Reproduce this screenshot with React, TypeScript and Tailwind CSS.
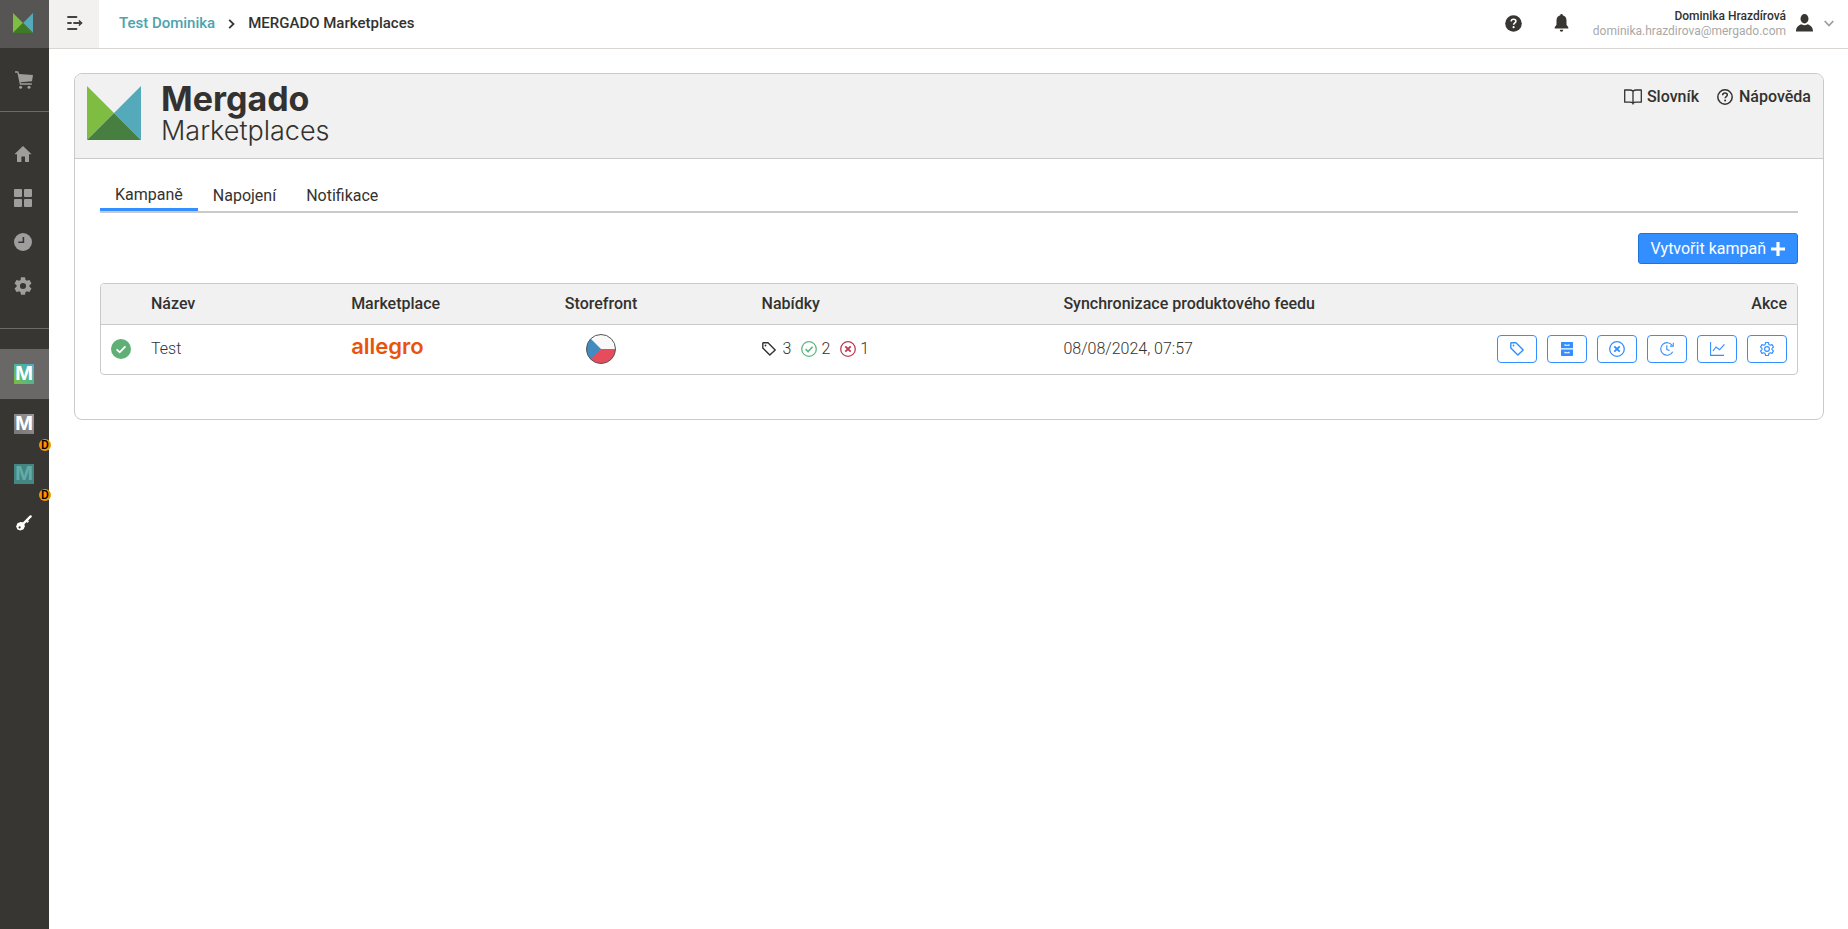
import React from 'react';
import type { ReactNode } from 'react';

function MergadoMark({ className, bottom = '#467f3f' }: { className: string; bottom?: string }) {
  return (
    <svg viewBox="0 0 54 54" className={className} aria-hidden="true">
      <path d="M0 0 27 27 0 54Z" fill="#7fbc42" />
      <path d="M54 0 27 27 54 54Z" fill="#54a9ba" />
      <path d="M27 27 54 54H0Z" fill={bottom} />
    </svg>
  );
}

function CartIcon() {
  return (
    <svg viewBox="0 0 18 18" className="size-[18px]" fill="currentColor" aria-hidden="true">
      <path d="M0 .3h3.2l1 2.6L18 4.1l-1 6.2-11.5.9.3 1.1h11v1.4H4.9L2.4 1.8H0Z" />
      <circle cx="5.6" cy="16.2" r="1.5" />
      <circle cx="14" cy="16.2" r="1.5" />
    </svg>
  );
}

function HomeIcon() {
  return (
    <svg viewBox="0 0 18 18" className="size-[18px]" fill="currentColor" aria-hidden="true">
      <path d="M9 1 17.6 9.3H15V17h-4v-5.6H7.4V17H3V9.3H.4Z" />
    </svg>
  );
}

function GridIcon() {
  return (
    <svg viewBox="0 0 18 18" className="size-[18px]" fill="currentColor" aria-hidden="true">
      <rect width="8" height="8" rx="1" />
      <rect x="10" width="8" height="8" rx="1" />
      <rect y="10" width="8" height="8" rx="1" />
      <rect x="10" y="10" width="8" height="8" rx="1" />
    </svg>
  );
}

function ClockIcon() {
  return (
    <svg viewBox="0 0 18 18" className="size-[18px]" aria-hidden="true">
      <circle cx="9" cy="9" r="9" fill="currentColor" />
      <path d="M9.4 4v5.300H4.300" fill="none" stroke="#383632" strokeWidth="1.6" />
    </svg>
  );
}

function CogIcon() {
  return (
    <svg viewBox="2 2 20 20" className="size-[18px]" fill="currentColor" aria-hidden="true">
      <path d="M19.14 12.94c.04-.3.06-.61.06-.94 0-.32-.02-.64-.07-.94l2.03-1.58a.49.49 0 0 0 .12-.61l-1.92-3.32a.49.49 0 0 0-.59-.22l-2.39.96a7 7 0 0 0-1.62-.94l-.36-2.54a.48.48 0 0 0-.48-.41h-3.84a.47.47 0 0 0-.47.41l-.36 2.54c-.59.24-1.13.57-1.62.94l-2.39-.96a.48.48 0 0 0-.59.22L2.74 8.87a.47.47 0 0 0 .12.61l2.03 1.58c-.05.3-.09.63-.09.94s.02.64.07.94l-2.03 1.58a.49.49 0 0 0-.12.61l1.92 3.32c.12.22.37.29.59.22l2.39-.96c.5.38 1.03.7 1.62.94l.36 2.54c.05.24.24.41.48.41h3.84c.24 0 .44-.17.47-.41l.36-2.54c.59-.24 1.13-.56 1.62-.94l2.39.96c.22.08.47 0 .59-.22l1.92-3.32a.47.47 0 0 0-.12-.61ZM12 15.4a3.4 3.4 0 1 1 0-6.8 3.4 3.4 0 0 1 0 6.8Z" />
    </svg>
  );
}

function KeyIcon() {
  return (
    <svg viewBox="0 0 16 16" className="size-4" aria-hidden="true">
      <path d="M6.5 9.5 14.6 1.4" stroke="#fff" strokeWidth="2.4" strokeLinecap="round" />
      <path d="m10 5 2.200 2.200" stroke="#fff" strokeWidth="2.400" />
      <path d="M4.600 6.900 8 7.400l.8 3.900-1.200 2.900-3.200 1.300-3-.9-1.200-3 1.200-3.400Z" fill="#fff" />
      <circle cx="3.6" cy="12.400" r="1.1" fill="#383632" />
    </svg>
  );
}

function MenuIcon() {
  return (
    <svg viewBox="0 0 16 14" className="h-3.5 w-4" fill="none" stroke="#45433f" strokeWidth="1.8" strokeLinecap="round" aria-hidden="true">
      <path d="M1 1h8.500M1 7h3M7 7h7M1 13h8.500" />
      <path d="M12 4.500 15.500 7 12 9.500Z" fill="#45433f" stroke="none" />
      <path d="m12.300 4.700 2.300 2.300-2.300 2.300" strokeWidth="1.300" />
    </svg>
  );
}

function HelpSolidIcon() {
  return (
    <svg viewBox="0 0 17 17" className="size-[17px]" aria-hidden="true">
      <circle cx="8.5" cy="8.5" r="8.3" fill="#383632" />
      <path d="M6.1 6.4c.1-1.4 1-2.2 2.4-2.2s2.4.8 2.4 2c0 1.7-2.2 1.7-2.3 3.6" fill="none" stroke="#fff" strokeWidth="1.6" />
      <circle cx="8.6" cy="12.2" r="1.1" fill="#fff" />
    </svg>
  );
}

function BellIcon() {
  return (
    <svg viewBox="0 0 15 18" className="h-[18px] w-[15px]" fill="#383632" aria-hidden="true">
      <path d="M7.5 0c.8 0 1.2.5 1.2 1.3 2.4.6 3.8 2.5 3.8 5.1v4.3l1.8 2.6v1.2H.7v-1.2l1.8-2.6V6.4c0-2.6 1.4-4.5 3.8-5.1C6.3.5 6.7 0 7.5 0ZM5.8 15.7h3.4c0 1.3-.7 2-1.7 2s-1.7-.7-1.7-2Z" />
    </svg>
  );
}

function UserIcon() {
  return (
    <svg viewBox="0 0 17 18" className="h-[18px] w-[17px]" fill="#383632" aria-hidden="true">
      <ellipse cx="8.5" cy="4.8" rx="4" ry="4.7" />
      <path d="M0 17.5c0-4 1.6-5.8 5.4-7.3 1.9 1.3 4.3 1.3 6.2 0 3.8 1.5 5.4 3.3 5.4 7.3Z" />
    </svg>
  );
}

function BookIcon() {
  return (
    <svg viewBox="0 0 18 16" className="h-4 w-[18px]" fill="none" stroke="currentColor" strokeWidth="1.3" strokeLinejoin="round" aria-hidden="true">
      <path d="M9 2.2C8 1.2 7 1 5.5 1H.7v12.2H6c1.4 0 2.3.2 3 1 .7-.8 1.6-1 3-1h5.3V1h-4.8C11 1 10 1.2 9 2.2Zm0 0v13.3" />
    </svg>
  );
}

function HelpIcon() {
  return (
    <svg viewBox="0 0 16 16" className="size-4" fill="none" stroke="currentColor" strokeWidth="1.5" aria-hidden="true">
      <circle cx="8" cy="8" r="7.2" />
      <path d="M5.7 6.2c0-1.3.9-2.1 2.3-2.1s2.3.8 2.3 1.9c0 1.5-2.2 1.6-2.200 3.300" strokeWidth="1.5" />
      <circle cx="8.1" cy="11.5" r="1" fill="currentColor" stroke="none" />
    </svg>
  );
}

function TagIcon({ className }: { className: string }) {
  return (
    <svg viewBox="0 0 14 14" className={className} fill="none" stroke="currentColor" strokeWidth="1.4" strokeLinejoin="round" aria-hidden="true">
      <path d="M.8 1.2v4.700l7 7.200 5.400-5.200L6 .8H1.200Z" />
      <circle cx="3.5" cy="3.5" r=".9" fill="currentColor" stroke="none" />
    </svg>
  );
}

function CircleIcon({ mark }: { mark: 'check' | 'cross' }) {
  return (
    <svg viewBox="0 0 16 16" className="size-4" fill="none" stroke="currentColor" aria-hidden="true">
      <circle cx="8" cy="8" r="7.3" strokeWidth="1.3" />
      {mark === 'check' ? (
        <path d="m4.6 8.2 2.5 2.4 4.5-4.9" strokeWidth="1.7" />
      ) : (
        <path d="m5.3 5.3 5.4 5.4m0-5.4-5.4 5.4" strokeWidth="1.9" />
      )}
    </svg>
  );
}

function CabinetIcon() {
  return (
    <svg viewBox="0 0 12 14" className="h-3.5 w-3" aria-hidden="true">
      <path d="M.5 0h11l.5.5v5.8H0V.5ZM0 7.6h12v5.9l-.5.5H.5l-.5-.5Z" fill="currentColor" />
      <path d="M4 2.2v1h4v-1M4 9.8v1h4v-1" fill="none" stroke="#fff" strokeWidth="1.1" />
    </svg>
  );
}

function HistoryIcon() {
  return (
    <svg viewBox="0 0 14 14" className="size-3.5" fill="none" stroke="currentColor" strokeWidth="1.1" aria-hidden="true">
      <path d="M12.3 3.500A6.300 6.300 0 1 0 12.700 9.700" />
      <path d="M13.300.8v3.300h-3.300" />
      <path d="M6.800 3.300v4.200l2.800.9" />
    </svg>
  );
}

function ChartIcon() {
  return (
    <svg viewBox="0 0 15 14" className="h-3.5 w-[15px]" fill="none" stroke="currentColor" aria-hidden="true">
      <path d="M.6 0v13.4H14" strokeWidth="1.1" />
      <path d="m3 9 3-4 3.600 2.800 4.800-5.400" strokeWidth="1.2" />
    </svg>
  );
}

function GearOutlineIcon() {
  return (
    <svg viewBox="0 0 24 24" className="size-4" fill="none" stroke="currentColor" strokeWidth="1.7" strokeLinejoin="round" aria-hidden="true">
      <circle cx="12" cy="12" r="3.6" />
      <path d="M9.9 2.2h4.2l.7 3 1.9 1.1 2.9-.9L21.700 9l-2.200 2.100v1.800l2.200 2.100-2.100 3.600-2.900-.9-1.900 1.100-.7 3H9.900l-.7-3-1.900-1.100-2.900.9L2.300 15l2.200-2.100v-1.800L2.300 9l2.100-3.600 2.900.9 1.900-1.100Z" />
    </svg>
  );
}

function CzechFlag() {
  return (
    <svg viewBox="0 0 30 30" className="size-[30px]" role="img" aria-label="CZ">
      <defs>
        <clipPath id="flag">
          <circle cx="15" cy="15" r="14.5" />
        </clipPath>
      </defs>
      <g clipPath="url(#flag)">
        <path d="M0 0h30v15H0Z" fill="#f9f9f9" />
        <path d="M0 15h30v15H0Z" fill="#e64c5c" />
        <path d="M0 0 15 15 0 30Z" fill="#428bc1" />
      </g>
      <circle cx="15" cy="15" r="14.5" fill="none" stroke="#555" strokeWidth="1" />
    </svg>
  );
}

const navIcons: { label: string; icon: ReactNode }[] = [
  { label: 'Home', icon: <HomeIcon /> },
  { label: 'Overview', icon: <GridIcon /> },
  { label: 'History', icon: <ClockIcon /> },
  { label: 'Settings', icon: <CogIcon /> },
];

const actions: { label: string; icon: ReactNode }[] = [
  { label: 'Nabídky', icon: <TagIcon className="size-3.5" /> },
  { label: 'Kategorie', icon: <CabinetIcon /> },
  { label: 'Chyby', icon: <CircleIcon mark="cross" /> },
  { label: 'Historie', icon: <HistoryIcon /> },
  { label: 'Statistiky', icon: <ChartIcon /> },
  { label: 'Nastavení', icon: <GearOutlineIcon /> },
];

function AppTile({ className }: { className: string }) {
  return (
    <span className={`flex size-5 items-center justify-center font-['Inter',sans-serif] text-[19px] leading-5 font-bold ${className}`}>
      M
    </span>
  );
}

function DevBadge() {
  return (
    <span className="absolute top-10 left-[39px] flex size-3 items-center justify-center rounded-full bg-[#f79400] text-xs leading-3 font-medium text-black">
      D
    </span>
  );
}

function Sidebar() {
  return (
    <nav className="relative z-10 flex w-[49px] shrink-0 flex-col bg-[#383632] text-[#a09e9c]">
      <a href="#mergado" aria-label="Mergado" className="flex h-12 items-center bg-[#565553] pb-0.5 pl-[13px]">
        <MergadoMark className="size-5" bottom="#3f7a27" />
      </a>
      <a href="#shop" aria-label="Shop" className="flex h-16 items-center border-b border-[#6d6b68] pl-[15px]">
        <CartIcon />
      </a>
      <div className="flex h-[217px] flex-col border-b border-[#6d6b68] pt-5">
        {navIcons.map((item) => (
          <a key={item.label} href={`#${item.label.toLowerCase()}`} aria-label={item.label} className="flex h-11 items-center pl-3.5">
            {item.icon}
          </a>
        ))}
      </div>
      <div className="flex flex-col pt-5">
        <a href="#marketplaces" className="flex h-[50px] items-center bg-[#6a6866] pl-3.5">
          <AppTile className="bg-linear-to-tr from-[#83bc1d] via-[#4fb58c] to-[#50a8d0] text-white" />
        </a>
        <a href="#app-dev" className="relative flex h-[50px] items-center pl-3.5">
          <AppTile className="bg-linear-to-tr from-[#777577] to-[#999799] text-white" />
          <DevBadge />
        </a>
        <a href="#app-test" className="relative flex h-[50px] items-center pl-3.5">
          <AppTile className="bg-[#458682] text-[#63aba6]" />
          <DevBadge />
        </a>
        <a href="#keys" aria-label="Keys" className="flex h-[50px] items-center pb-0.5 pl-4">
          <KeyIcon />
        </a>
      </div>
    </nav>
  );
}

function TopBar() {
  return (
    <header className="flex h-[49px] items-stretch border-b border-[#d9d5d2]">
      <button type="button" aria-label="Menu" className="flex w-[50px] items-center justify-center bg-[#f2f1f0] pb-0.5 pl-0.5">
        <MenuIcon />
      </button>
      <div className="flex items-center gap-[13px] pb-px pl-5 text-[15px] font-medium">
        <a href="#project" className="text-[#4ba3ae]">Test Dominika</a>
        <svg viewBox="0 0 7 10" className="h-2.5 w-[7px]" fill="none" stroke="#383632" strokeWidth="1.8" aria-hidden="true">
          <path d="m1.200.8 4.300 4.200-4.300 4.200" />
        </svg>
        <span>MERGADO Marketplaces</span>
      </div>
      <div className="ml-auto flex items-center pr-3.5">
        <button type="button" aria-label="Help" className="mr-8 pb-0.5">
          <HelpSolidIcon />
        </button>
        <button type="button" aria-label="Notifications" className="mr-6 pb-0.5">
          <BellIcon />
        </button>
        <button type="button" className="flex items-center pb-0.5 text-right">
          <span className="flex flex-col">
            <span className="text-xs leading-[15px] font-medium">Dominika Hrazdírová</span>
            <span className="text-xs leading-[14px] text-[#aaa8a6]">dominika.hrazdirova@mergado.com</span>
          </span>
          <span className="ml-2.5">
            <UserIcon />
          </span>
          <svg viewBox="0 0 10 7" className="ml-[11px] h-[7px] w-2.5" fill="none" stroke="#a09e9c" strokeWidth="1.8" aria-hidden="true">
            <path d="m.7 1 4.300 4.500L9.300 1" />
          </svg>
        </button>
      </div>
    </header>
  );
}

function CampaignTable() {
  return (
    <div className="mt-[19px] overflow-hidden rounded border border-[#cacaca]">
      <table className="w-full table-fixed text-left">
        <thead className="bg-[#f1f1f1]">
          <tr className="h-10 border-b border-[#cacaca]">
            <th className="w-10" aria-label="Stav" />
            <th className="w-[11.8%] px-2.5 font-medium">Název</th>
            <th className="w-[12.6%] px-2.5 font-medium">Marketplace</th>
            <th className="w-[11.6%] px-2.5 font-medium">Storefront</th>
            <th className="w-[17.8%] px-2.5 font-medium">Nabídky</th>
            <th className="px-2.5 font-medium">Synchronizace produktového feedu</th>
            <th className="w-[310px] px-2.5 text-right font-medium">Akce</th>
          </tr>
        </thead>
        <tbody>
          <tr className="h-[50px] font-light">
            <td className="pl-2.5">
              <svg viewBox="0 0 20 20" className="size-5" aria-hidden="true">
                <circle cx="10" cy="10" r="10" fill="#5fb075" />
                <path d="m5.6 10.3 3.1 3 5.700-6" fill="none" stroke="#fff" strokeWidth="1.8" />
              </svg>
            </td>
            <td className="px-2.5">Test</td>
            <td className="px-2.5">
              <span className="block pb-1.5 font-['Inter',sans-serif] text-[22px] leading-6 font-semibold text-[#e8540c]">allegro</span>
            </td>
            <td className="px-2.5">
              <span className="flex w-[72px] justify-center">
                <CzechFlag />
              </span>
            </td>
            <td className="px-2.5">
              <span className="flex items-center">
                <TagIcon className="mr-[7px] size-3.5" />
                3
                <span className="mr-1 ml-2.5 text-[#5fb884]">
                  <CircleIcon mark="check" />
                </span>
                2
                <span className="mr-1 ml-2.5 text-[#be3d54]">
                  <CircleIcon mark="cross" />
                </span>
                1
              </span>
            </td>
            <td className="px-2.5">08/08/2024, 07:57</td>
            <td className="px-2.5">
              <div className="flex justify-end gap-2.5">
                {actions.map((action) => (
                  <button
                    key={action.label}
                    type="button"
                    aria-label={action.label}
                    className="flex h-7 w-10 items-center justify-center rounded border border-[#338fff] text-[#338fff]"
                  >
                    {action.icon}
                  </button>
                ))}
              </div>
            </td>
          </tr>
        </tbody>
      </table>
    </div>
  );
}

export default function App() {
  return (
    <div className="flex min-h-screen bg-white font-['Roboto',sans-serif] text-base text-[#333230]">
      <Sidebar />
      <div className="min-w-0 flex-1">
        <TopBar />
        <main className="px-6 pt-6 pl-[25px]">
          <section className="overflow-hidden rounded-lg border border-[#cacaca]">
            <div className="flex h-[85px] items-start border-b border-[#cacaca] bg-[#f1f1f1] px-3">
              <MergadoMark className="mt-3 size-[54px]" />
              <h1 className="ml-5 flex flex-col pt-2 font-['Inter',sans-serif]">
                <span className="text-[34px] leading-[34px] font-bold">Mergado</span>
                <span className="text-[27px] leading-[30px] font-light">Marketplaces</span>
              </h1>
              <div className="ml-auto flex gap-[18px] pt-[11px] font-medium">
                <a href="#slovnik" className="flex items-center gap-[5px]">
                  <BookIcon />
                  Slovník
                </a>
                <a href="#napoveda" className="flex items-center gap-1.5">
                  <HelpIcon />
                  Nápověda
                </a>
              </div>
            </div>
            <div className="px-[25px] pt-6 pb-11">
              <div role="tablist" className="flex h-[30px] items-stretch border-b-2 border-[#cacaca]">
                <button type="button" role="tab" aria-selected="true" className="border-b-3 border-[#338fff] px-[15px] pb-1.5">
                  Kampaně
                </button>
                <button type="button" role="tab" aria-selected="false" className="px-[15px] pb-0.5">
                  Napojení
                </button>
                <button type="button" role="tab" aria-selected="false" className="px-[15px] pb-0.5">
                  Notifikace
                </button>
              </div>
              <div className="mt-5 flex justify-end">
                <button type="button" className="flex h-[31px] items-center gap-[5px] rounded-[3px] border border-[#1f74d8] bg-[#338fff] pr-3 pl-[11px] text-white">
                  Vytvořit kampaň
                  <svg viewBox="0 0 14 14" className="size-3.5" stroke="#fff" strokeWidth="3.2" aria-hidden="true">
                    <path d="M7 0v14M0 7h14" />
                  </svg>
                </button>
              </div>
              <CampaignTable />
            </div>
          </section>
        </main>
      </div>
    </div>
  );
}
